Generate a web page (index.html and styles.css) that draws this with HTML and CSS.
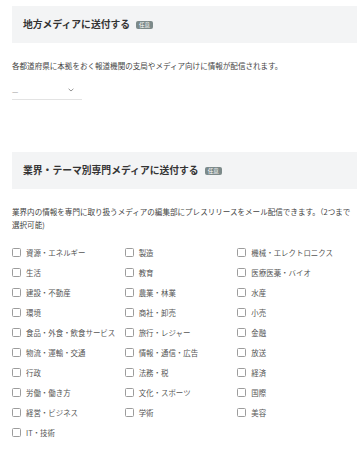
FILE: index.html
```html
<!DOCTYPE html>
<html lang="ja">
<head>
<meta charset="utf-8">
<link rel="stylesheet" href="styles.css">
</head>
<body>
<div class="page">
  <section class="section">
    <div class="sec-head">
      <h2 class="sec-title">地方メディアに送付する</h2>
      <span class="badge">任意</span>
    </div>
    <p class="desc">各都道府県に本拠をおく報道機関の支局やメディア向けに情報が配信されます。</p>
    <div class="select">
      <span class="select-value">—</span>
      <svg class="chev" width="6" height="4" viewBox="0 0 6 4"><path d="M0.6 0.8 L3 3 L5.4 0.8" fill="none" stroke="#888" stroke-width="0.9"/></svg>
    </div>
  </section>

  <section class="section second">
    <div class="sec-head">
      <h2 class="sec-title">業界・テーマ別専門メディアに送付する</h2>
      <span class="badge">任意</span>
    </div>
    <p class="desc narrow">業界内の情報を専門に取り扱うメディアの編集部にプレスリリースをメール配信できます。（2つまで選択可能)</p>
    <div class="grid">
      <label class="item"><input type="checkbox"><span>資源・エネルギー</span></label>
      <label class="item"><input type="checkbox"><span>製造</span></label>
      <label class="item"><input type="checkbox"><span>機械・エレクトロニクス</span></label>
      <label class="item"><input type="checkbox"><span>生活</span></label>
      <label class="item"><input type="checkbox"><span>教育</span></label>
      <label class="item"><input type="checkbox"><span>医療医薬・バイオ</span></label>
      <label class="item"><input type="checkbox"><span>建設・不動産</span></label>
      <label class="item"><input type="checkbox"><span>農業・林業</span></label>
      <label class="item"><input type="checkbox"><span>水産</span></label>
      <label class="item"><input type="checkbox"><span>環境</span></label>
      <label class="item"><input type="checkbox"><span>商社・卸売</span></label>
      <label class="item"><input type="checkbox"><span>小売</span></label>
      <label class="item"><input type="checkbox"><span>食品・外食・飲食サービス</span></label>
      <label class="item"><input type="checkbox"><span>旅行・レジャー</span></label>
      <label class="item"><input type="checkbox"><span>金融</span></label>
      <label class="item"><input type="checkbox"><span>物流・運輸・交通</span></label>
      <label class="item"><input type="checkbox"><span>情報・通信・広告</span></label>
      <label class="item"><input type="checkbox"><span>放送</span></label>
      <label class="item"><input type="checkbox"><span>行政</span></label>
      <label class="item"><input type="checkbox"><span>法務・税</span></label>
      <label class="item"><input type="checkbox"><span>経済</span></label>
      <label class="item"><input type="checkbox"><span>労働・働き方</span></label>
      <label class="item"><input type="checkbox"><span>文化・スポーツ</span></label>
      <label class="item"><input type="checkbox"><span>国際</span></label>
      <label class="item"><input type="checkbox"><span>経営・ビジネス</span></label>
      <label class="item"><input type="checkbox"><span>学術</span></label>
      <label class="item"><input type="checkbox"><span>美容</span></label>
      <label class="item"><input type="checkbox"><span>IT・技術</span></label>
    </div>
  </section>
</div>
</body>
</html>
```
FILE: styles.css
```css
* { box-sizing: border-box; }
html, body { margin: 0; padding: 0; background: #fff; }
body {
  font-family: "Noto Sans CJK JP", "Noto Sans", sans-serif;
  color: #444;
  width: 363px;
}
.page {
  padding: 6px 6px 0 12px;
}
.sec-head {
  display: flex;
  align-items: center;
  height: 37px;
  padding-left: 11px;
  background: #f3f4f5;
}
.sec-title {
  margin: 0;
  font-size: 9.8px;
  font-weight: 700;
  color: #333;
  line-height: 1;
}
.badge {
  margin-left: 6px;
  display: inline-block;
  height: 8px;
  line-height: 8px;
  padding: 0 3px;
  font-size: 5.5px;
  color: #fff;
  background: #7c8a8a;
  border-radius: 2px;
}
.desc {
  margin: 16px 0 0;
  font-size: 7.55px;
  line-height: 13px;
  color: #444;
}
.desc.narrow { padding-right: 1px; }
.select {
  margin-top: 13px;
  width: 70px;
  height: 15px;
  display: flex;
  align-items: center;
  justify-content: space-between;
  padding: 0 8px 2px 0;
  border-bottom: 1px solid #e3e3e3;
}
.select-value {
  font-size: 7px;
  color: #888;
  line-height: 1;
}
.chev { display: block; margin-top: -3px; }
.second { margin-top: 52px; }
.grid {
  margin-top: 11px;
  width: 338px;
  display: grid;
  grid-template-columns: repeat(3, 1fr);
  grid-auto-rows: 20.1px;
}
.item {
  display: flex;
  align-items: center;
  gap: 5px;
  font-size: 7.45px;
  color: #555;
  white-space: nowrap;
}
.item input {
  appearance: none;
  -webkit-appearance: none;
  margin: 0;
  width: 9px;
  height: 9px;
  border: 1px solid #9c9c9c;
  border-radius: 1.5px;
  background: #fff;
  flex: none;
}
```
